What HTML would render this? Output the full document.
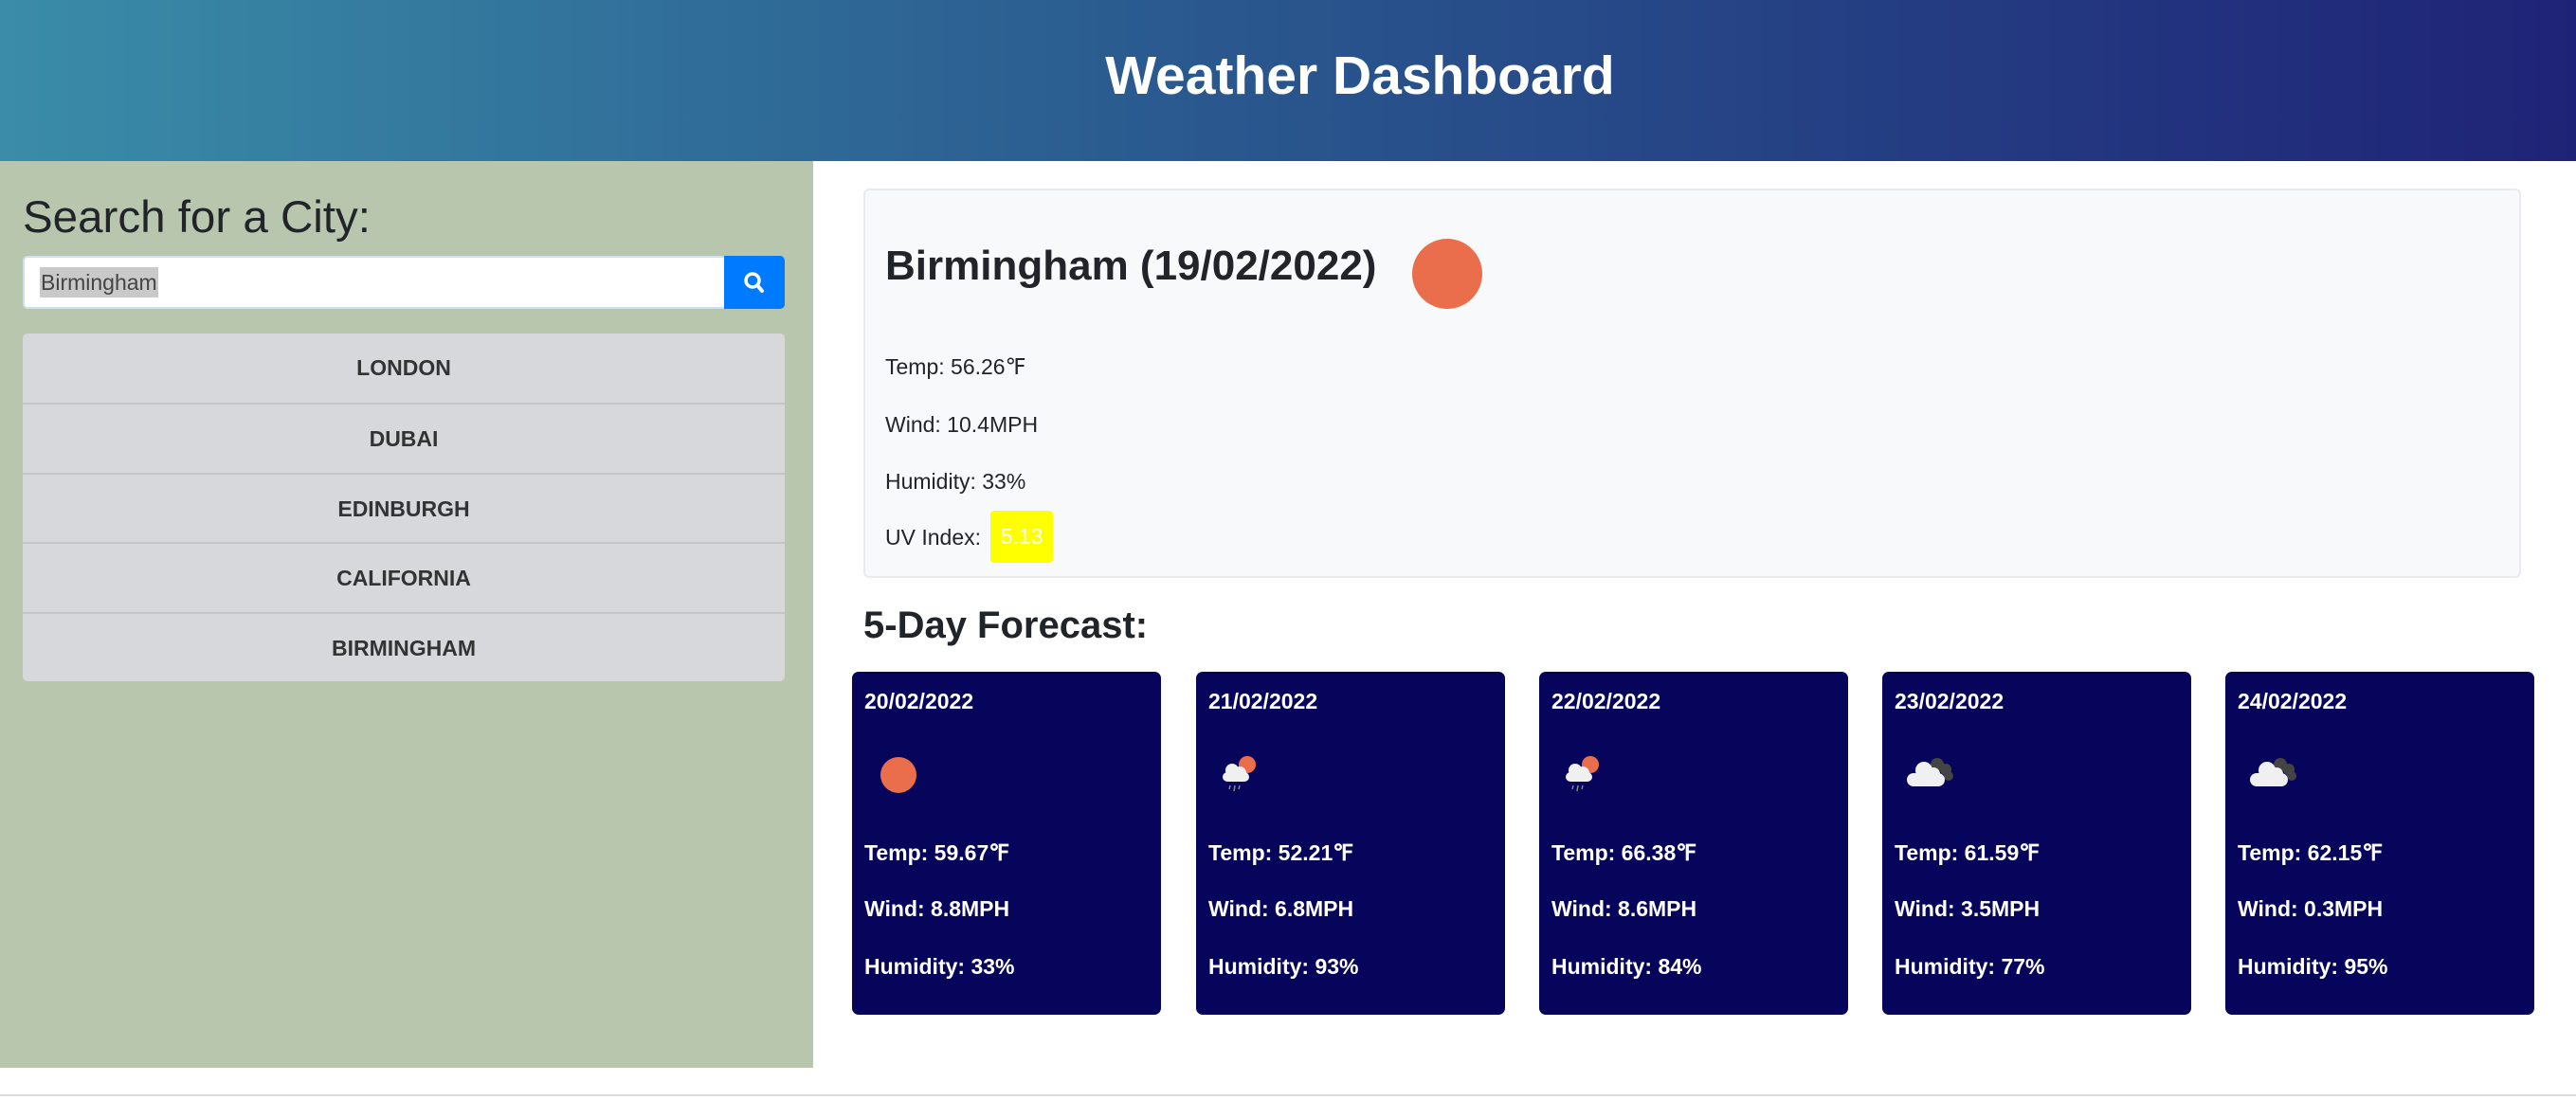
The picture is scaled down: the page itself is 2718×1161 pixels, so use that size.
<!DOCTYPE html>
<html><head><meta charset="utf-8"><style>
*{margin:0;padding:0;box-sizing:border-box}
body{width:2718px;height:1161px;position:relative;background:#fff;font-family:"Liberation Sans",sans-serif;color:#212529;overflow:hidden}
.a{position:absolute}
header{position:absolute;left:0;top:0;width:2718px;height:170px;background:linear-gradient(90deg,#3a8ca8,#2a5a8f 45%,#1f2377);}
header h1{color:#fff;font-size:57px;font-weight:bold;text-align:center;line-height:160px;padding-left:152px}
.side{left:0;top:170px;width:858px;height:957px;background:#b8c6ae}
.list{left:24px;top:352px;width:804px;border-radius:5px;overflow:hidden}
.list div{height:73.4px;background:#d6d8db;border-top:2px solid #c3c5c8;text-align:center;font-weight:bold;font-size:23px;line-height:72px;color:#333}
.list div:first-child{border-top:none}
.main{left:911px;top:199px;width:1749px;height:411px;background:#f8f9fa;border:2px solid #e8eaed;border-radius:6px}
.t{font-size:23px}
.card{top:709px;width:326px;height:362px;background:#06055b;border-radius:7px;color:#fff}
.card p{position:absolute;left:13px;font-size:23px;font-weight:bold}
</style></head><body>
<header><h1>Weather Dashboard</h1></header>
<div class="a side"></div>
<div class="a" style="left:24px;top:202px;font-size:47.5px;color:#212529">Search for a City:</div>
<div class="a" style="left:24px;top:270px;width:742px;height:56px;background:#fff;border:2px solid #cfe0ea;border-radius:5px 0 0 5px"></div>
<div class="a" style="left:42px;top:282px;height:32px;background:#c9c9c9;font-size:23px;line-height:32px;color:#444;padding:0 1px">Birmingham</div>
<div class="a" style="left:764px;top:270px;width:64px;height:56px;background:#007bff;border-radius:0 5px 5px 0">
<svg width="64" height="56" viewBox="0 0 64 56"><circle cx="30" cy="26" r="7" fill="none" stroke="#fff" stroke-width="3.5"/><line x1="35" y1="31" x2="40" y2="37" stroke="#fff" stroke-width="4" stroke-linecap="round"/></svg></div>
<div class="a list"><div>LONDON</div><div>DUBAI</div><div>EDINBURGH</div><div>CALIFORNIA</div><div>BIRMINGHAM</div></div>
<div class="a" style="left:0;top:1155px;width:2718px;height:2px;background:#ddd"></div>
<div class="a main"></div>
<div class="a" style="left:934px;top:256px;font-size:44px;font-weight:bold">Birmingham (19/02/2022)</div>
<div class="a" style="left:1490px;top:252px;width:74px;height:74px;border-radius:50%;background:#ea6e4b"></div>
<div class="a t" style="left:934px;top:374px">Temp: 56.26℉</div>
<div class="a t" style="left:934px;top:435px">Wind: 10.4MPH</div>
<div class="a t" style="left:934px;top:495px">Humidity: 33%</div>
<div class="a t" style="left:934px;top:554px">UV Index:</div>
<div class="a" style="left:1045px;top:539px;width:66px;height:55px;background:#ffff00;border-radius:4px;color:#fff;font-size:23px;text-align:center;line-height:55px">5.13</div>
<div class="a" style="left:911px;top:638px;font-size:40px;font-weight:bold">5-Day Forecast:</div>

<div class="a card" style="left:899px"><p style="top:18px">20/02/2022</p>
<div class="a" style="left:30px;top:90px;width:38px;height:38px;border-radius:50%;background:#ea6e4b"></div>
<p style="top:178px">Temp: 59.67℉</p><p style="top:237px">Wind: 8.8MPH</p><p style="top:298px">Humidity: 33%</p></div>

<div class="a card" style="left:1262px"><p style="top:18px">21/02/2022</p>
<svg class="a" style="left:22px;top:86px" width="50" height="50" viewBox="0 0 50 50"><circle cx="32" cy="12" r="9" fill="#ea6e4b"/><g fill="#f0f0f0"><circle cx="16" cy="18" r="7"/><circle cx="24" cy="21" r="7"/><rect x="6" y="20" width="28" height="10" rx="5"/></g><g stroke="#888" stroke-width="1.5"><line x1="14" y1="34" x2="13" y2="38"/><line x1="19" y1="34" x2="18" y2="40"/><line x1="24" y1="34" x2="23" y2="38"/></g></svg>
<p style="top:178px">Temp: 52.21℉</p><p style="top:237px">Wind: 6.8MPH</p><p style="top:298px">Humidity: 93%</p></div>

<div class="a card" style="left:1624px"><p style="top:18px">22/02/2022</p>
<svg class="a" style="left:22px;top:86px" width="50" height="50" viewBox="0 0 50 50"><circle cx="32" cy="12" r="9" fill="#ea6e4b"/><g fill="#f0f0f0"><circle cx="16" cy="18" r="7"/><circle cx="24" cy="21" r="7"/><rect x="6" y="20" width="28" height="10" rx="5"/></g><g stroke="#888" stroke-width="1.5"><line x1="14" y1="34" x2="13" y2="38"/><line x1="19" y1="34" x2="18" y2="40"/><line x1="24" y1="34" x2="23" y2="38"/></g></svg>
<p style="top:178px">Temp: 66.38℉</p><p style="top:237px">Wind: 8.6MPH</p><p style="top:298px">Humidity: 84%</p></div>

<div class="a card" style="left:1986px"><p style="top:18px">23/02/2022</p>
<svg class="a" style="left:22px;top:86px" width="60" height="50" viewBox="0 0 60 50"><g fill="#444"><circle cx="36" cy="12" r="7"/><circle cx="45" cy="17" r="6"/><circle cx="48" cy="24" r="5"/></g><g fill="#f0f0f0"><circle cx="22" cy="18" r="9"/><circle cx="32" cy="22" r="7"/><rect x="4" y="21" width="40" height="14" rx="7"/></g></svg>
<p style="top:178px">Temp: 61.59℉</p><p style="top:237px">Wind: 3.5MPH</p><p style="top:298px">Humidity: 77%</p></div>

<div class="a card" style="left:2348px"><p style="top:18px">24/02/2022</p>
<svg class="a" style="left:22px;top:86px" width="60" height="50" viewBox="0 0 60 50"><g fill="#444"><circle cx="36" cy="12" r="7"/><circle cx="45" cy="17" r="6"/><circle cx="48" cy="24" r="5"/></g><g fill="#f0f0f0"><circle cx="22" cy="18" r="9"/><circle cx="32" cy="22" r="7"/><rect x="4" y="21" width="40" height="14" rx="7"/></g></svg>
<p style="top:178px">Temp: 62.15℉</p><p style="top:237px">Wind: 0.3MPH</p><p style="top:298px">Humidity: 95%</p></div>
</body></html>
